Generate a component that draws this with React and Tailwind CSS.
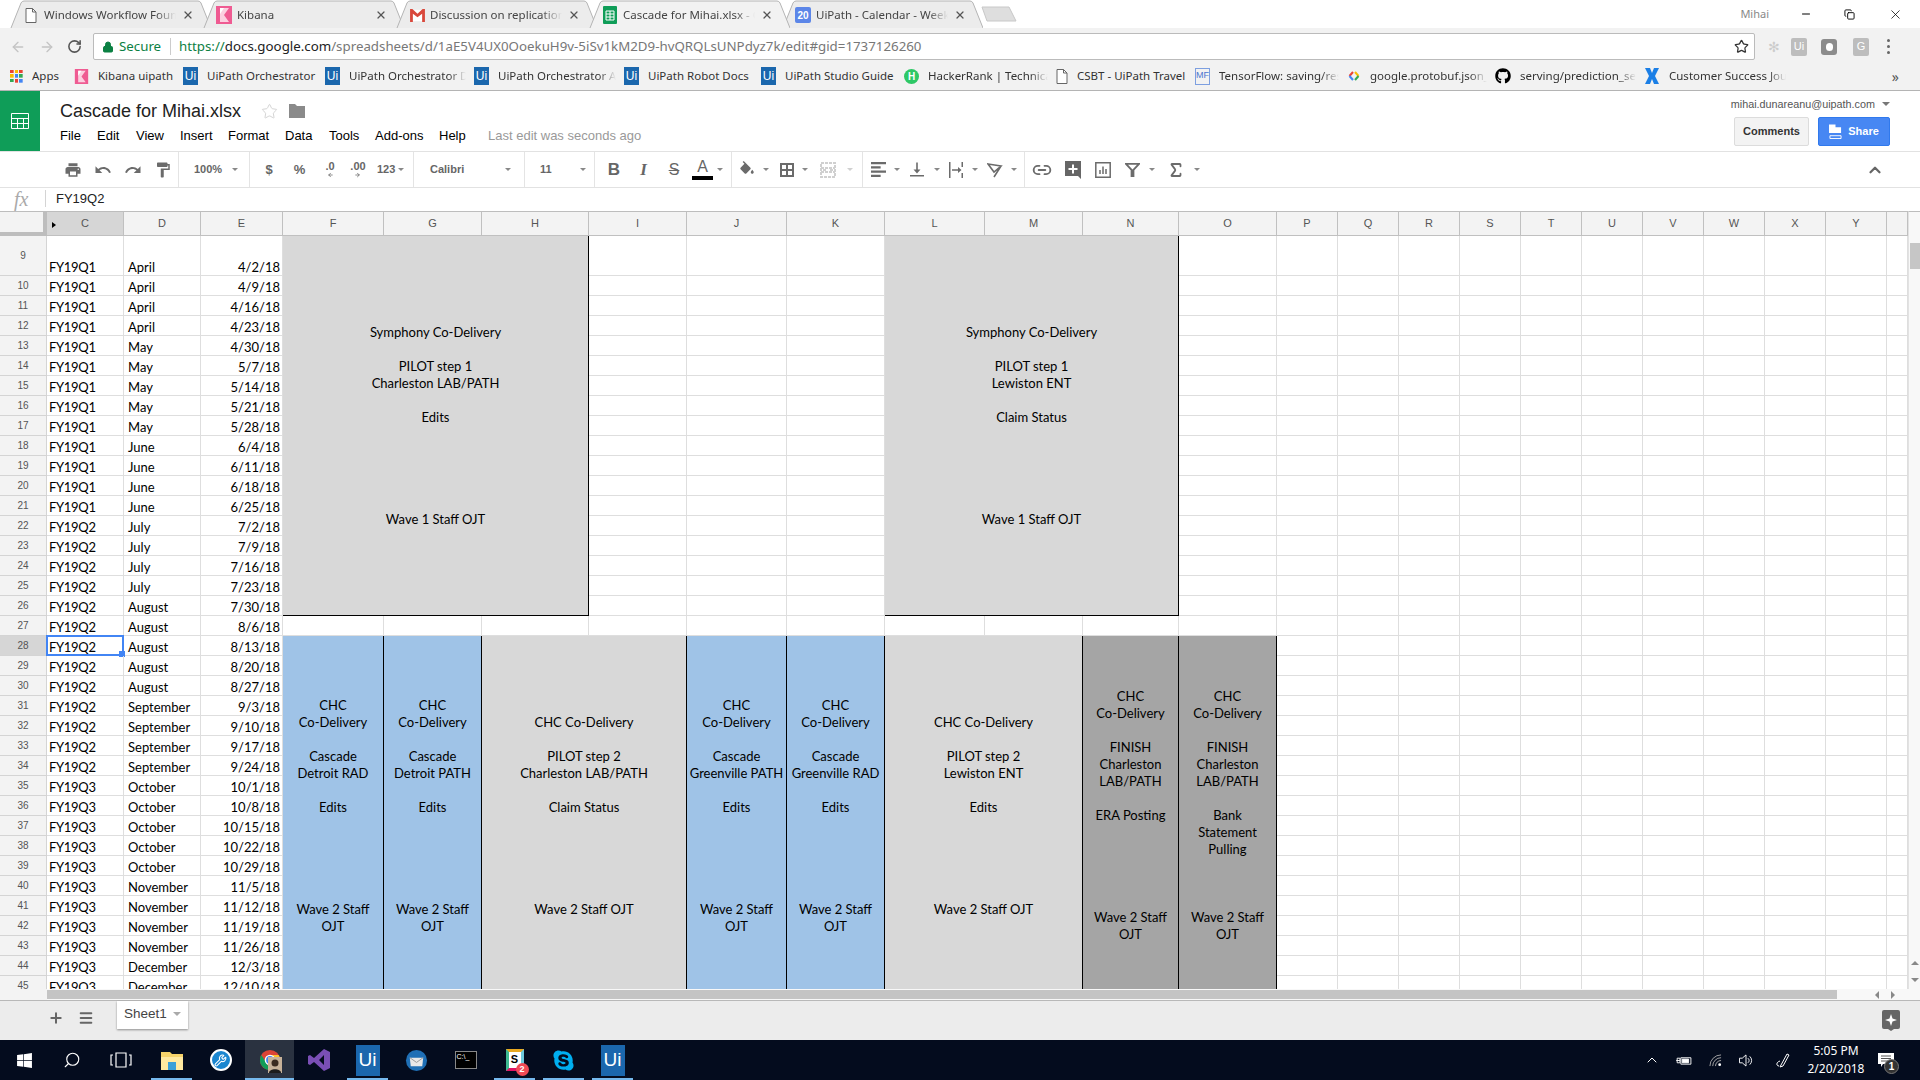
import { ChevronUp, Link2, Sigma, Search, Wrench, Star, Lock, RotateCw, ArrowLeft, ArrowRight, Plus, Menu, X, Minus, Copy } from "lucide-react";
import { FaWindows, FaGithub, FaSkype } from "react-icons/fa";

const ui = "font-['Noto_Sans',sans-serif]";
const arial = "font-['Liberation_Sans',Arial,sans-serif]";
const CELL_FONT = "font-['Lato',sans-serif]";

const columns = ["C", "D", "E", "F", "G", "H", "I", "J", "K", "L", "M", "N", "O", "P", "Q", "R", "S", "T", "U", "V", "W", "X", "Y", ""];

const dates = [
  ["FY19Q1", "April", "4/2/18"], ["FY19Q1", "April", "4/9/18"], ["FY19Q1", "April", "4/16/18"], ["FY19Q1", "April", "4/23/18"],
  ["FY19Q1", "May", "4/30/18"], ["FY19Q1", "May", "5/7/18"], ["FY19Q1", "May", "5/14/18"], ["FY19Q1", "May", "5/21/18"], ["FY19Q1", "May", "5/28/18"],
  ["FY19Q1", "June", "6/4/18"], ["FY19Q1", "June", "6/11/18"], ["FY19Q1", "June", "6/18/18"], ["FY19Q1", "June", "6/25/18"],
  ["FY19Q2", "July", "7/2/18"], ["FY19Q2", "July", "7/9/18"], ["FY19Q2", "July", "7/16/18"], ["FY19Q2", "July", "7/23/18"],
  ["FY19Q2", "August", "7/30/18"], ["FY19Q2", "August", "8/6/18"], ["FY19Q2", "August", "8/13/18"], ["FY19Q2", "August", "8/20/18"], ["FY19Q2", "August", "8/27/18"],
  ["FY19Q2", "September", "9/3/18"], ["FY19Q2", "September", "9/10/18"], ["FY19Q2", "September", "9/17/18"], ["FY19Q2", "September", "9/24/18"],
  ["FY19Q3", "October", "10/1/18"], ["FY19Q3", "October", "10/8/18"], ["FY19Q3", "October", "10/15/18"], ["FY19Q3", "October", "10/22/18"], ["FY19Q3", "October", "10/29/18"],
  ["FY19Q3", "November", "11/5/18"], ["FY19Q3", "November", "11/12/18"], ["FY19Q3", "November", "11/19/18"], ["FY19Q3", "November", "11/26/18"],
  ["FY19Q3", "December", "12/3/18"], ["FY19Q3", "December", "12/10/18"],
];

const blocks = [
  { pos: "col-start-5 col-span-3 row-start-2 row-span-18", bg: "bg-[#d8d8d8]", text: "Symphony Co-Delivery\n\nPILOT step 1\nCharleston LAB/PATH\n\nEdits\n\n\n\n\n\nWave 1 Staff OJT" },
  { pos: "col-start-11 col-span-3 row-start-2 row-span-18", bg: "bg-[#d8d8d8]", text: "Symphony Co-Delivery\n\nPILOT step 1\nLewiston ENT\n\nClaim Status\n\n\n\n\n\nWave 1 Staff OJT" },
  { pos: "col-start-5 col-span-1 row-start-21 row-span-18", bg: "bg-[#9fc3e7]", text: "CHC\nCo-Delivery\n\nCascade\nDetroit RAD\n\nEdits\n\n\n\n\n\nWave 2 Staff\nOJT" },
  { pos: "col-start-6 col-span-1 row-start-21 row-span-18", bg: "bg-[#9fc3e7]", text: "CHC\nCo-Delivery\n\nCascade\nDetroit PATH\n\nEdits\n\n\n\n\n\nWave 2 Staff\nOJT" },
  { pos: "col-start-7 col-span-2 row-start-21 row-span-18", bg: "bg-[#d8d8d8]", text: "CHC Co-Delivery\n\nPILOT step 2\nCharleston LAB/PATH\n\nClaim Status\n\n\n\n\n\nWave 2 Staff OJT" },
  { pos: "col-start-9 col-span-1 row-start-21 row-span-18", bg: "bg-[#9fc3e7]", text: "CHC\nCo-Delivery\n\nCascade\nGreenville PATH\n\nEdits\n\n\n\n\n\nWave 2 Staff\nOJT" },
  { pos: "col-start-10 col-span-1 row-start-21 row-span-18", bg: "bg-[#9fc3e7]", text: "CHC\nCo-Delivery\n\nCascade\nGreenville RAD\n\nEdits\n\n\n\n\n\nWave 2 Staff\nOJT" },
  { pos: "col-start-11 col-span-2 row-start-21 row-span-18", bg: "bg-[#d8d8d8]", text: "CHC Co-Delivery\n\nPILOT step 2\nLewiston ENT\n\nEdits\n\n\n\n\n\nWave 2 Staff OJT" },
  { pos: "col-start-13 col-span-1 row-start-21 row-span-18", bg: "bg-[#a5a5a5]", text: "CHC\nCo-Delivery\n\nFINISH\nCharleston\nLAB/PATH\n\nERA Posting\n\n\n\n\n\nWave 2 Staff\nOJT" },
  { pos: "col-start-14 col-span-1 row-start-21 row-span-18", bg: "bg-[#a5a5a5]", text: "CHC\nCo-Delivery\n\nFINISH\nCharleston\nLAB/PATH\n\nBank\nStatement\nPulling\n\n\n\nWave 2 Staff\nOJT" },
];

// how many plain cells each row still needs after the merged blocks are placed
function emptyCount(rowNum) {
  if (rowNum <= 26) return 15;
  if (rowNum === 27) return 21;
  return 11;
}

function UiIcon({ size = "w-[15px] h-[18px] text-[12px]" }) {
  return <span className={`${size} shrink-0 bg-[#1b67ad] text-white flex items-center justify-center ${arial}`}>Ui</span>;
}

function KibanaIcon({ size = "w-[16px] h-[18px]" }) {
  return (
    <svg viewBox="0 0 16 18" className={`${size} shrink-0`}>
      <rect width="16" height="18" fill="#ef5b92" />
      <path d="M4 2h9L8 9l5 7H4z" fill="#fbd0e0" />
      <path d="M4 2h4L4 8z" fill="#fff" />
    </svg>
  );
}

function DocIcon({ className = "w-[12px] h-[15px]" }) {
  return (
    <svg viewBox="0 0 12 15" className={`${className} shrink-0`} fill="none" stroke="#666">
      <path d="M1 .5h6.5l3.5 3.5v10.5H1z" fill="#fff" />
      <path d="M7.5.5V4H11" />
    </svg>
  );
}

function GmailIcon() {
  return (
    <svg viewBox="0 0 16 14" className="w-[15px] h-[13px] shrink-0">
      <rect width="16" height="14" fill="#fff" stroke="#ddd" />
      <path d="M0 0h2.5L8 5l5.500-5H16v14h-3V5L8 9 3 5v9H0z" fill="#d9483b" />
    </svg>
  );
}

function SheetsFavicon() {
  return (
    <svg viewBox="0 0 14 18" className="w-[14px] h-[18px] shrink-0">
      <rect width="14" height="18" rx="1" fill="#0f9d58" />
      <path d="M3 5h8v9H3zM3 8h8M3 11h8M7 5v9" fill="none" stroke="#fff" />
    </svg>
  );
}

function CalIcon() {
  return <span className={`w-[16px] h-[16px] shrink-0 rounded-[2px] bg-[#5c86e8] text-white text-[10px] font-bold flex items-center justify-center ${arial}`}>20</span>;
}

const tabs = [
  { title: "Windows Workflow Foundation", icon: <span className="w-[16px] flex justify-center"><DocIcon /></span> },
  { title: "Kibana", icon: <KibanaIcon /> },
  { title: "Discussion on replication", icon: <GmailIcon /> },
  { title: "Cascade for Mihai.xlsx - Google", icon: <SheetsFavicon />, active: true },
  { title: "UiPath - Calendar - Week", icon: <CalIcon /> },
];

function Tab({ tab, first }) {
  return (
    <div className={`relative w-[205px] h-[28px] shrink-0 ${first ? "ml-[6px]" : "-ml-[12px]"} ${tab.active ? "z-10" : ""}`}>
      <svg viewBox="0 0 205 28" className="absolute inset-0 w-[205px] h-[28px]">
        <path d="M5 28L15 3Q16 1 18 1H192Q194 1 195 3L205 28" fill={tab.active ? "#f2f2f2" : "#ececec"} stroke="#b4b4b4" />
      </svg>
      <div className="relative flex items-center h-full pt-[2px] pl-[17px] pr-[17px]">
        <span className="w-[16px] flex justify-center shrink-0">{tab.icon}</span>
        <span className={`ml-[5px] w-[134px] overflow-hidden whitespace-nowrap text-[11.5px] text-[#444] [mask-image:linear-gradient(to_right,black_85%,transparent)] ${ui}`}>{tab.title}</span>
        <X className="ml-[6px] w-[12px] h-[12px] text-[#555] shrink-0" strokeWidth={2.5} />
      </div>
    </div>
  );
}

const bookmarks = [
  { w: "w-[64px]", icon: <AppsIcon />, label: "Apps" },
  { w: "w-[109px]", icon: <KibanaIcon size="w-[15px] h-[15px]" />, label: "Kibana uipath" },
  { w: "w-[142px]", icon: <UiIcon />, label: "UiPath Orchestrator" },
  { w: "w-[149px]", icon: <UiIcon />, label: "UiPath Orchestrator Dev", fade: true },
  { w: "w-[150px]", icon: <UiIcon />, label: "UiPath Orchestrator Alpha", fade: true },
  { w: "w-[137px]", icon: <UiIcon />, label: "UiPath Robot Docs" },
  { w: "w-[143px]", icon: <UiIcon />, label: "UiPath Studio Guide" },
  { w: "w-[152px]", icon: <span className={`w-[15px] h-[15px] shrink-0 rounded-full bg-[#2ec866] text-white text-[10px] font-bold flex items-center justify-center ${arial}`}>H</span>, label: "HackerRank | Technical", fade: true },
  { w: "w-[139px]", icon: <DocIcon />, label: "CSBT - UiPath Travel" },
  { w: "w-[152px]", icon: <span className={`w-[15px] h-[17px] shrink-0 border border-[#7d9fe0] text-[#4a76d0] text-[9px] flex items-center justify-center ${arial}`}>MF</span>, label: "TensorFlow: saving/restoring", fade: true },
  { w: "w-[148px]", icon: <GoogleCode />, label: "google.protobuf.json_format", fade: true },
  { w: "w-[149px]", icon: <FaGithub className="w-[16px] h-[16px] shrink-0 text-black" />, label: "serving/prediction_service", fade: true },
  { w: "w-[150px]", icon: <BlueX />, label: "Customer Success Journey", fade: true },
];

function AppsIcon() {
  const c = ["#ea4335", "#fbbc05", "#ea4335", "#fbbc05", "#4285f4", "#34a853", "#34a853", "#ea4335", "#4285f4"];
  return (
    <span className="w-[13px] h-[13px] shrink-0 grid grid-cols-3 gap-px">
      {c.map((col, i) => <svg key={i} viewBox="0 0 3 3"><rect width="3" height="3" fill={col} /></svg>)}
    </span>
  );
}

function GoogleCode() {
  return (
    <svg viewBox="0 0 14 14" className="w-[14px] h-[14px] shrink-0" fill="none" strokeWidth="2">
      <path d="M6 3L2.500 7" stroke="#ea4335" />
      <path d="M2.500 7L6 11" stroke="#4285f4" />
      <path d="M8 3l3.500 4" stroke="#fbbc05" />
      <path d="M11.500 7L8 11" stroke="#34a853" />
    </svg>
  );
}

function BlueX() {
  return (
    <svg viewBox="0 0 16 18" className="w-[16px] h-[18px] shrink-0">
      <path d="M1 1h5l2 5 2-5h5l-4 8 4 8h-5l-2-5-2 5H1l4-8z" fill="#1b7fe6" />
    </svg>
  );
}

function Caret({ light }) {
  return (
    <span className="w-[8px] flex justify-center shrink-0">
      <span className={`w-0 h-0 border-x-[3px] border-x-transparent border-t-[3px] ${light ? "border-t-[#d0d0d0]" : "border-t-[#888]"}`} />
    </span>
  );
}

function Tool({ w = "w-[30px]", children }) {
  return <span className={`${w} h-full shrink-0 flex items-center justify-center text-[#666]`}>{children}</span>;
}

function Mi({ d, size = "w-[18px] h-[18px]" }) {
  return <svg viewBox="0 0 24 24" className={size} fill="#6b6b6b"><path d={d} /></svg>;
}

function Sep() {
  return <span className="w-px h-full bg-[#e4e4e4] shrink-0" />;
}

function Toolbar() {
  return (
    <div className={`h-[36px] flex items-center border-b border-[#e2e2e2] shrink-0 ${arial}`}>
      <div className="w-[58px] shrink-0" />
      <Tool><Mi d="M19 8H5c-1.660 0-3 1.340-3 3v6h4v4h12v-4h4v-6c0-1.660-1.340-3-3-3zm-3 11H8v-5h8v5zm3-7c-.55 0-1-.45-1-1s.45-1 1-1 1 .45 1 1-.45 1-1 1zm-1-9H6v4h12V3z" /></Tool>
      <Tool><Mi d="M12.500 8c-2.650 0-5.050.99-6.900 2.600L2 7v9h9l-3.620-3.620c1.390-1.160 3.160-1.880 5.120-1.880 3.540 0 6.550 2.310 7.600 5.500l2.370-.78C21.080 11.030 17.150 8 12.500 8z" /></Tool>
      <Tool><Mi d="M18.400 10.600C16.550 8.990 14.150 8 11.500 8c-4.650 0-8.580 3.030-9.960 7.220L3.900 16c1.050-3.190 4.050-5.500 7.600-5.500 1.950 0 3.730.72 5.120 1.880L13 16h9V7l-3.600 3.600z" /></Tool>
      <Tool><Mi d="M18 4V3c0-.55-.45-1-1-1H5c-.55 0-1 .45-1 1v4c0 .55.45 1 1 1h12c.55 0 1-.45 1-1V6h1v4H9v11c0 .55.45 1 1 1h2c.55 0 1-.45 1-1v-9h8V4h-3z" /></Tool>
      <Sep />

      <span className="w-[52px] pl-[15px] text-[11px] font-bold text-[#666] shrink-0">100%</span>
      <Caret />
      <span className="w-[10px] shrink-0" />
      <Sep />

      <Tool w="w-[34px]"><span className="ml-[4px] text-[13px] font-bold">$</span></Tool>
      <Tool w="w-[31px]"><span className="text-[13px] font-bold">%</span></Tool>
      <Tool>
        <span className="flex flex-col items-center leading-none">
          <span className="text-[11px] font-bold">.0</span>
          <ArrowLeft className="w-[9px] h-[6px]" strokeWidth={3} />
        </span>
      </Tool>
      <Tool w="w-[26px]">
        <span className="flex flex-col items-center leading-none">
          <span className="text-[11px] font-bold">.00</span>
          <ArrowRight className="w-[9px] h-[6px]" strokeWidth={3} />
        </span>
      </Tool>
      <span className="w-[26px] pl-[6px] text-[11px] font-bold text-[#666] shrink-0">123</span>
      <Caret />
      <span className="w-[8px] shrink-0" />
      <Sep />

      <span className="w-[90px] pl-[16px] text-[11px] font-bold text-[#666] shrink-0">Calibri</span>
      <Caret />
      <span className="w-[12px] shrink-0" />
      <Sep />

      <span className="w-[54px] pl-[15px] text-[11px] font-bold text-[#666] shrink-0">11</span>
      <Caret />
      <span className="w-[7px] shrink-0" />
      <Sep />

      <Tool w="w-[34px]"><span className="ml-[4px] text-[17px] font-bold">B</span></Tool>
      <Tool w="w-[25px]"><span className="ml-[4px] text-[17px] font-bold italic font-['Liberation_Serif',serif]">I</span></Tool>
      <Tool w="w-[36px]"><span className="ml-[4px] text-[16px] line-through">S</span></Tool>
      <Tool w="w-[23px]">
        <span className="ml-[2px] relative flex flex-col items-center leading-none">
          <span className="text-[16px]">A</span>
          <span className="w-[21px] h-[4px] mt-[1px] bg-black" />
        </span>
      </Tool>
      <Tool w="w-[13px]"><Caret /></Tool>
      <span className="w-[5px] shrink-0" />
      <Sep />

      <Tool><Mi d="M16.560 8.940L7.620 0 6.210 1.410l2.380 2.380-5.150 5.150c-.59.59-.59 1.540 0 2.120l5.500 5.500c.29.29.68.44 1.060.44s.77-.15 1.060-.44l5.500-5.500c.59-.58.59-1.530 0-2.120zM19 11.500s-2 2.170-2 3.500c0 1.100.9 2 2 2s2-.9 2-2c0-1.330-2-3.500-2-3.500z" /></Tool>
      <Caret />
      <span className="w-[3px] shrink-0" />
      <Tool w="w-[28px]">
        <svg viewBox="0 0 14 14" className="w-[14px] h-[14px]" fill="none" stroke="#6b6b6b" strokeWidth="2"><path d="M1 1h12v12H1zM7 1v12M1 7h12" /></svg>
      </Tool>
      <Caret />
      <Tool w="w-[37px]">
        <svg viewBox="0 0 16 16" className="w-[16px] h-[16px]" fill="none" stroke="#d0d0d0" strokeWidth="2"><path d="M1 1h14v14H1zM1 6h14M1 10h14M3 8h4M13 8H9" strokeDasharray="3 1" /></svg>
      </Tool>
      <Caret light />
      <span className="w-[8px] shrink-0" />
      <Sep />

      <Tool>
        <svg viewBox="0 0 14 14" className="w-[15px] h-[15px]" fill="#6b6b6b"><path d="M0 0h14v2H0zM0 4h9v2H0zM0 8h14v2H0zM0 12h9v2H0z" /></svg>
      </Tool>
      <Caret />
      <Tool w="w-[32px]">
        <svg viewBox="0 0 14 14" className="w-[14px] h-[15px]" fill="#6b6b6b"><path d="M0 12.500h14V14H0zM6.200 0h1.600v7H10.500L7 11 3.500 7h2.700z" /></svg>
      </Tool>
      <Caret />
      <Tool>
        <svg viewBox="0 0 14 16" className="w-[14px] h-[16px]" fill="#6b6b6b"><path d="M0 0h1.500v16H0zM12.500 0H14v5h-1.500zM12.500 11H14v5h-1.500zM3 7.200h6V5l3.500 3L9 11V8.800H3z" /></svg>
      </Tool>
      <Caret />
      <span className="w-[1px] shrink-0" />
      <Tool>
        <svg viewBox="0 0 16 16" className="w-[16px] h-[16px]" fill="none" stroke="#6b6b6b" strokeWidth="1.600"><path d="M1 2l13 2-7 6zM14 4L7 15" /></svg>
      </Tool>
      <Caret />
      <span className="w-[6px] shrink-0" />
      <Sep />

      <Tool w="w-[33px]"><Link2 className="w-[20px] h-[20px] text-[#6b6b6b]" strokeWidth={2.2} /></Tool>
      <Tool>
        <svg viewBox="0 0 16 18" className="w-[16px] h-[18px]"><path d="M0 0h16v18l-3-3H0z" fill="#666" /><path d="M7 3.500h2V7h3.500v2H9v3.500H7V9H3.500V7H7z" fill="#fff" /></svg>
      </Tool>
      <Tool>
        <svg viewBox="0 0 16 16" className="w-[16px] h-[16px]" fill="none" stroke="#6b6b6b" strokeWidth="1.500"><path d="M.8.8h14.400v14.400H.8zM5 12V8M8 12V4.500M11 12V7" /></svg>
      </Tool>
      <Tool w="w-[28px]">
        <svg viewBox="0 0 16 16" className="w-[15px] h-[15px]" fill="none" stroke="#6b6b6b" strokeWidth="2"><path d="M1 2h14L9 8.500V15H7V8.500z" /></svg>
      </Tool>
      <span className="w-[2px] shrink-0" />
      <Caret />
      <span className="w-[3px] shrink-0" />
      <Tool w="w-[34px]"><Sigma className="w-[18px] h-[18px] text-[#6b6b6b]" strokeWidth={2.4} /></Tool>
      <Caret />
      <ChevronUp className="ml-auto mr-[36px] w-[18px] h-[18px] text-[#666]" strokeWidth={3} />
    </div>
  );
}

function SheetGrid() {
  return (
    <div className="flex-1 overflow-hidden">
      <div className={`grid grid-cols-[47px_77px_77px_82px_101px_98px_107px_98px_100px_98px_100px_98px_96px_98px_61px_61px_61px_61px_61px_61px_61px_61px_61px_61px_21px] grid-rows-[25px_40px_repeat(36,20px)] text-black text-[13px] ${CELL_FONT}`}>
        {blocks.map((b, i) => (
          <div key={i} className={`${b.pos} ${b.bg} border border-black -ml-px -mt-px flex items-center justify-center text-center whitespace-pre-line leading-[17px]`}>
            {b.text}
          </div>
        ))}

        <div className="bg-[#f3f3f3] border-t border-t-[#bdbdbd] border-r-4 border-b-4 border-[#bdbdbd]" />
        {columns.map((c, i) => (
          <div key={i} className={`relative flex items-center justify-center border-t border-t-[#bdbdbd] border-r border-b border-[#c0c0c0] text-[11px] text-[#555] ${arial} ${c === "C" ? "bg-[#d6d6d6]" : "bg-[#f3f3f3]"}`}>
            {c === "C" && <span className="absolute left-[5px] top-[10px] w-0 h-0 border-y-[3.5px] border-y-transparent border-l-[4px] border-l-black" />}
            {c}
          </div>
        ))}

        {dates.map((d, i) => {
          const rowNum = i + 9;
          const selected = rowNum === 28;
          return [
            <div key={`h${i}`} className={`flex items-center justify-center border-r border-b border-[#d4d4d4] text-[10px] text-[#555] ${arial} ${selected ? "bg-[#d6d6d6]" : "bg-[#f3f3f3]"}`}>{rowNum}</div>,
            <div key={`c${i}`} className="relative flex items-end pl-[2px] border-r border-b border-[#dedede] leading-[15px] tracking-[-0.3px]">
              {d[0]}
              {selected && (
                <span className="absolute -left-px -top-px w-[78px] h-[21px] border-2 border-[#4285f4]">
                  <span className="absolute -right-[3px] -bottom-[3px] w-[6px] h-[6px] bg-[#4285f4]" />
                </span>
              )}
            </div>,
            <div key={`d${i}`} className="flex items-end pl-[4px] border-r border-b border-[#dedede] leading-[15px]">{d[1]}</div>,
            <div key={`e${i}`} className="flex items-end justify-end pr-[2px] border-r border-b border-[#dedede] leading-[15px]">{d[2]}</div>,
            ...Array.from({ length: emptyCount(rowNum) }, (_, k) => (
              <div key={`x${i}-${k}`} className="border-r border-b border-[#dedede]" />
            )),
          ];
        })}
      </div>
    </div>
  );
}

function TaskbarItem({ active, highlight, children }) {
  return (
    <div className={`relative w-[49px] h-[40px] flex items-center justify-center shrink-0 ${highlight ? "bg-[#2a3240]" : ""}`}>
      {children}
      {active && <span className={`absolute bottom-0 h-[2px] bg-[#76b9ed] ${highlight ? "inset-x-0" : "inset-x-[4px]"}`} />}
    </div>
  );
}

function Taskbar() {
  return (
    <div className={`h-[40px] bg-[#040c1e] flex items-center text-white shrink-0 ${ui}`}>
      <div className="w-[48px] flex justify-center shrink-0"><FaWindows className="w-[17px] h-[17px]" /></div>
      <div className="w-[48px] flex justify-center shrink-0"><Search className="w-[18px] h-[18px] -scale-x-100" strokeWidth={1.5} /></div>
      <div className="w-[49px] flex justify-center shrink-0">
        <svg viewBox="0 0 22 16" className="w-[22px] h-[16px]" fill="none" stroke="#fff" strokeWidth="1.200"><path d="M6 1h10v14H6zM3 3H1v10h2M19 3h2v10h-2" /></svg>
      </div>
      <div className="w-[2px] shrink-0" />
      <TaskbarItem active>
        <svg viewBox="0 0 22 22" className="w-[22px] h-[22px]"><path d="M0 3h9l2 2h11v16H0z" fill="#f6d36a" /><path d="M0 8h22v13H0z" fill="#ffe9a0" /><path d="M7 13h8v8H7z" fill="#3a9fd8" /></svg>
      </TaskbarItem>
      <TaskbarItem>
        <span className="w-[22px] h-[22px] rounded-full bg-[#1a86d0] border-2 border-white flex items-center justify-center"><Wrench className="w-[13px] h-[13px]" /></span>
      </TaskbarItem>
      <TaskbarItem active highlight>
        <svg viewBox="0 0 24 24" className="w-[22px] h-[22px]">
          <circle cx="12" cy="12" r="11" fill="#db4437" />
          <path d="M12 23A11 11 0 0 1 2.500 6.500L8 15z" fill="#0f9d58" />
          <path d="M12 23a11 11 0 0 0 9.500-16.500H12z" fill="#fbc02d" />
          <circle cx="12" cy="12" r="5" fill="#4285f4" stroke="#fff" strokeWidth="1.500" />
        </svg>
        <svg viewBox="0 0 14 16" className="absolute left-[23px] top-[17px] w-[14px] h-[16px]"><rect width="14" height="16" fill="#c7b299" /><circle cx="7" cy="6" r="3.500" fill="#3b2c20" /><path d="M1 16c0-5 12-5 12 0z" fill="#1c1c1c" /></svg>
      </TaskbarItem>
      <TaskbarItem>
        <svg viewBox="0 0 24 24" className="w-[24px] h-[24px]"><path d="M17 1l6 3v16l-6 3-10-9-4 3-2-1V8l2-1 4 3zM17 7l-5 5 5 5z" fill="#7a4fb5" /></svg>
      </TaskbarItem>
      <TaskbarItem active><UiIcon size="w-[24px] h-[31px] text-[19px]" /></TaskbarItem>
      <TaskbarItem>
        <svg viewBox="0 0 24 24" className="w-[23px] h-[23px]"><circle cx="12" cy="12" r="11" fill="#1f6fb5" /><path d="M5 9h14l-1 9H6z" fill="#e8e8e8" /><path d="M5 9l7 5 7-5" fill="none" stroke="#999" /></svg>
      </TaskbarItem>
      <TaskbarItem>
        <span className={`w-[22px] h-[18px] bg-black border border-[#888] text-[7px] leading-[10px] pl-[1px] ${arial}`}>C:\_</span>
      </TaskbarItem>
      <TaskbarItem active>
        <span className={`relative w-[18px] h-[22px] bg-white border-l-[3px] border-t-[3px] border-l-[#3eb991] border-t-[#e9a820] border-r-[3px] border-r-[#6ecadc] border-b-[3px] border-b-[#e01563] text-black text-[11px] font-bold leading-[15px] text-center ${arial}`}>
          S
          <span className="absolute -right-[8px] -bottom-[8px] w-[13px] h-[13px] rounded-full bg-[#f04a55] text-white text-[9px] leading-[13px]">2</span>
        </span>
      </TaskbarItem>
      <TaskbarItem active><FaSkype className="w-[23px] h-[23px] text-[#00aff0]" /></TaskbarItem>
      <TaskbarItem active><UiIcon size="w-[24px] h-[31px] text-[19px]" /></TaskbarItem>

      <div className="ml-auto flex items-center h-full">
        <ChevronUp className="w-[16px] h-[16px] mr-[16px]" strokeWidth={1.5} />
        <svg viewBox="0 0 18 12" className="w-[17px] h-[11px] mr-[16px]" fill="none" stroke="#fff"><path d="M5 3h11v7H5z" /><path d="M6.500 4.500h7v4h-7z" fill="#fff" /><path d="M0 6h4M1 3.500h3v5H1z" /></svg>
        <svg viewBox="0 0 14 14" className="w-[13px] h-[13px] mr-[16px]" fill="none" stroke="#aaa"><path d="M1 13A12 12 0 0 1 13 1M4 13a9 9 0 0 1 9-9M7 13a6 6 0 0 1 6-6" /><circle cx="11.500" cy="11.500" r="1.500" fill="#fff" stroke="none" /></svg>
        <svg viewBox="0 0 16 14" className="w-[16px] h-[13px] mr-[21px]" fill="none" stroke="#fff"><path d="M1 4.500h3l4-3.500v12l-4-3.500H1z" /><path d="M10 4.500a3 3 0 0 1 0 5M12 2.500a6 6 0 0 1 0 9" /></svg>
        <svg viewBox="0 0 16 16" className="w-[16px] h-[16px] mr-[10px]" fill="none" stroke="#fff"><path d="M6 13l6-11 2 1-6 11-3 1zM5 9c-4 1-4 5-1 5" /></svg>
        <div className="w-[70px] text-center text-[12px] leading-[18px] mr-[7px]">
          <div>5:05 PM</div>
          <div>2/20/2018</div>
        </div>
        <div className="relative w-[20px] mr-[22px]">
          <svg viewBox="0 0 16 14" className="w-[16px] h-[14px]"><path d="M0 0h16v11H5l-2 3v-3H0z" fill="#fff" /><path d="M3 3h10M3 5.500h10M3 8h7" stroke="#555" /></svg>
          <span className={`absolute left-[6px] top-[6px] w-[15px] h-[15px] rounded-full bg-[#333] border border-[#777] text-[10px] leading-[13px] text-center font-bold ${arial}`}>1</span>
        </div>
      </div>
    </div>
  );
}

export default function App() {
  return (
    <div className="w-[1920px] h-[1080px] overflow-hidden bg-white flex flex-col">
      {/* chrome tab strip */}
      <div className="h-[28px] flex items-center shrink-0 bg-white">
        {tabs.map((t, i) => <Tab key={i} tab={t} first={i === 0} />)}
        <svg viewBox="0 0 36 16" className="ml-[-2px] mt-[-1px] w-[36px] h-[16px]"><path d="M1 1h27l7 14H6z" fill="#dedede" stroke="#c8c8c8" /></svg>
        <span className={`ml-auto mr-[31px] text-[11px] text-[#888] ${ui}`}>Mihai</span>
        <Minus className="w-[12px] h-[12px] mr-[32px] text-black" />
        <Copy className="w-[11px] h-[11px] mr-[33px] text-black" />
        <X className="w-[15px] h-[15px] mr-[17px] text-black" strokeWidth={1.2} />
      </div>

      {/* address bar */}
      <div className="h-[34px] pt-[3px] bg-[#f2f2f2] flex items-center shrink-0">
        <div className="w-[93px] flex items-center shrink-0 pl-[10px]">
          <ArrowLeft className="w-[16px] h-[16px] text-[#c4c4c4]" />
          <ArrowRight className="ml-[13px] w-[16px] h-[16px] text-[#c4c4c4]" />
          <RotateCw className="ml-[12px] w-[15px] h-[15px] text-[#555]" strokeWidth={2.5} />
        </div>
        <div className={`w-[1662px] h-[27px] bg-white border border-[#bbb] rounded-[2px] flex items-center text-[13.3px] ${ui}`}>
          <Lock className="ml-[8px] w-[12px] h-[12px] text-[#0b8043]" fill="#0b8043" />
          <span className="ml-[5px] text-[#0b8043] w-[42px]">Secure</span>
          <span className="ml-[9px] w-px h-[17px] bg-[#ccc]" />
          <span className="ml-[8px] whitespace-nowrap">
            <span className="text-[#0b8043]">https://</span>
            <span className="text-[#222]">docs.google.com</span>
            <span className="text-[#777]">/spreadsheets/d/1aE5V4UX0OoekuH9v-5iSv1kM2D9-hvQRQLsUNPdyz7k/edit#gid=1737126260</span>
          </span>
          <Star className="ml-auto mr-[5px] w-[15px] h-[15px] text-[#333]" strokeWidth={2} />
        </div>
        <span className="ml-[12px] w-[14px] text-center text-[14px] text-[#ccc]">✻</span>
        <span className={`ml-[10px] w-[16px] h-[18px] rounded-[2px] bg-[#bdbdbd] text-white text-[11px] flex items-center justify-center ${arial}`}>Ui</span>
        <span className="ml-[14px] w-[16px] h-[16px] rounded-[3px] bg-[#8c8c8c] flex items-center justify-center"><span className="w-[7px] h-[8px] rounded-full bg-white" /></span>
        <span className={`ml-[16px] w-[16px] h-[18px] rounded-[2px] bg-[#bdbdbd] text-white text-[11px] flex items-center justify-center ${arial}`}>G</span>
        <span className="ml-[18px] flex flex-col gap-[3px]">
          <span className="w-[3px] h-[3px] rounded-full bg-[#666]" />
          <span className="w-[3px] h-[3px] rounded-full bg-[#666]" />
          <span className="w-[3px] h-[3px] rounded-full bg-[#666]" />
        </span>
      </div>

      {/* bookmarks */}
      <div className={`h-[28px] bg-[#f2f2f2] flex items-center shrink-0 pl-[10px] text-[11.5px] text-[#333] ${ui}`}>
        {bookmarks.map((b, i) => (
          <div key={i} className={`${b.w} shrink-0 flex items-center gap-[9px] overflow-hidden`}>
            {b.icon}
            <span className={`min-w-0 flex-1 mr-[8px] overflow-hidden whitespace-nowrap ${b.fade ? "[mask-image:linear-gradient(to_right,black_85%,transparent)]" : ""}`}>{b.label}</span>
          </div>
        ))}
        <span className="ml-auto mr-[21px] text-[14px] text-[#555]">»</span>
      </div>

      {/* docs header */}
      <div className={`h-[62px] border-t border-[#b4b4b4] border-b border-b-[#e2e2e2] flex shrink-0 ${arial}`}>
        <div className="w-[40px] bg-[#0f9d58] flex items-center justify-center shrink-0">
          <svg viewBox="0 0 18 16" className="w-[18px] h-[16px]" fill="none" stroke="#fff"><path d="M.5.5h17v15H.5zM.5 5.500h17M.5 10.500h17M6.500 5.500v10M12.500 5.500v10" /></svg>
        </div>
        <div className="pl-[20px] flex flex-col">
          <div className="flex items-center h-[38px] pt-[2px]">
            <span className="text-[18px] text-[#222] w-[201px]">Cascade for Mihai.xlsx</span>
            <Star className="w-[17px] h-[17px] text-[#ccc]" strokeWidth={1.2} />
            <svg viewBox="0 0 16 14" className="ml-[11px] w-[16px] h-[14px]"><path d="M0 0h6l2 2h8v12H0z" fill="#8a8a8a" /></svg>
          </div>
          <div className="flex items-center -mt-[3px] text-[13px] text-black">
            <span className="w-[37px]">File</span>
            <span className="w-[39px]">Edit</span>
            <span className="w-[44px]">View</span>
            <span className="w-[48px]">Insert</span>
            <span className="w-[57px]">Format</span>
            <span className="w-[44px]">Data</span>
            <span className="w-[46px]">Tools</span>
            <span className="w-[64px]">Add-ons</span>
            <span className="w-[49px]">Help</span>
            <span className="text-[#999]">Last edit was seconds ago</span>
          </div>
        </div>
        <div className="ml-auto mr-[30px] flex flex-col items-end">
          <div className="h-[26px] flex items-center text-[10.8px] text-[#555]">
            mihai.dunareanu@uipath.com
            <span className="ml-[7px] w-0 h-0 border-x-[4px] border-x-transparent border-t-[4px] border-t-[#777]" />
          </div>
          <div className="flex items-center">
            <span className="w-[75px] h-[29px] bg-[#f3f3f3] border border-[#dcdcdc] rounded-[2px] text-[11px] font-bold text-[#333] flex items-center justify-center">Comments</span>
            <span className="ml-[9px] w-[72px] h-[29px] bg-[#4787f3] border border-[#3079ed] rounded-[2px] text-[11px] font-bold text-white flex items-center justify-center gap-[6px]">
              <svg viewBox="0 0 14 16" className="w-[13px] h-[16px]" fill="#fff"><path d="M0 0h7v3h6v6H0z" /><path d="M1 12h12v3H1z" fill="none" stroke="#fff" /></svg>
              Share
            </span>
          </div>
        </div>
      </div>

      <Toolbar />

      {/* formula bar */}
      <div className={`h-[23px] pb-[2px] flex items-center shrink-0 ${arial}`}>
        <span className="w-[45px] pl-[14px] text-[20px] italic text-[#aaa] font-['Liberation_Serif',serif]">fx</span>
        <span className="w-px h-[17px] bg-[#d4d4d4]" />
        <span className="ml-[10px] text-[13px] text-[#222]">FY19Q2</span>
      </div>

      {/* grid and vertical scrollbar */}
      <div className="h-[778px] flex shrink-0">
        <SheetGrid />
        <div className="w-[12px] shrink-0 bg-[#f8f8f8] border-l border-[#e2e2e2] border-t border-t-[#bdbdbd] flex flex-col items-center pt-[31px]">
          <span className="w-[10px] h-[26px] bg-[#c6c6c6]" />
          <span className="mt-auto w-0 h-0 border-x-[4px] border-x-transparent border-b-[4px] border-b-[#888]" />
          <span className="mt-[13px] mb-[7px] w-0 h-0 border-x-[4px] border-x-transparent border-t-[4px] border-t-[#888]" />
        </div>
      </div>

      {/* horizontal scrollbar */}
      <div className="h-[12px] bg-[#f8f8f8] flex items-center border-b border-[#b8b8b8] shrink-0">
        <span className="w-[47px] h-full bg-[#f3f3f3] shrink-0" />
        <span className="w-[1790px] h-[9px] bg-[#c4c4c4] shrink-0" />
        <span className="ml-[38px] w-0 h-0 border-y-[4px] border-y-transparent border-r-[4px] border-r-[#888]" />
        <span className="ml-[12px] w-0 h-0 border-y-[4px] border-y-transparent border-l-[4px] border-l-[#888]" />
      </div>

      {/* sheet tabs */}
      <div className={`h-[39px] bg-[#ececec] flex items-start shrink-0 ${arial}`}>
        <Plus className="ml-[48px] mt-[9px] w-[16px] h-[16px] text-[#666]" strokeWidth={3} />
        <Menu className="ml-[14px] mt-[9px] w-[16px] h-[16px] text-[#666]" strokeWidth={3} />
        <div className="ml-[23px] w-[71px] h-[28px] pb-[2px] bg-white shadow-[0_1px_2px_rgba(0,0,0,0.4)] flex items-center pl-[7px] text-[13.5px] text-[#444]">
          Sheet1
          <span className="ml-[6px] w-0 h-0 border-x-[4px] border-x-transparent border-t-[4px] border-t-[#aaa]" />
        </div>
        <svg viewBox="0 0 18 21" className="ml-auto mr-[20px] mt-[9px] w-[18px] h-[21px]"><path d="M0 2q0-2 2-2h14q2 0 2 2v15q0 2-2 2h-4l-3 2-3-2H2q-2 0-2-2z" fill="#666" /><path d="M9 4l1.500 4.500L15 10l-4.500 1.500L9 16l-1.500-4.500L3 10l4.500-1.500z" fill="#fff" /></svg>
      </div>

      <Taskbar />
    </div>
  );
}
